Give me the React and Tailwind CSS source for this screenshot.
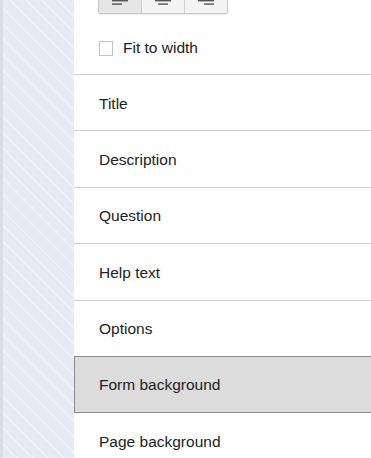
import React from 'react';

const rows = ['Title', 'Description', 'Question', 'Help text', 'Options', 'Form background', 'Page background'];

const AlignIcon = ({ align }) => {
  const x2 = align === 'left' ? 0 : align === 'center' ? 3 : 6;
  return (
    <svg width="16" height="7" viewBox="0 0 16 7">
      <rect x="0" y="0" width="16" height="1.4" fill="#555" />
      <rect x={x2} y="3.4" width="10" height="1.4" fill="#555" />
    </svg>
  );
};

export default function App() {
  return (
    <div className="flex w-[371px] h-[458px] overflow-hidden bg-white font-['Liberation_Sans',Arial,sans-serif] text-[15.5px] text-[#222]">
      {/* striped gutter */}
      <div className="w-[74px] shrink-0 flex">
        <div className="w-[3px] bg-[#d9dee6]" />
        <div className="flex-1 bg-[#e6ecf5] bg-[repeating-linear-gradient(45deg,#e5ebf4_0px,#e5ebf4_9px,#eef2f8_9px,#eef2f8_11px)]" />
      </div>

      <div className="flex-1 flex flex-col">
        {/* alignment buttons */}
        <div className="pl-[24px] h-[15px] shrink-0 flex">
          <div className="flex -mt-[12px] h-[26px] border border-[#c8c8c8] rounded-b-[2px] shadow-[0_1px_1px_rgba(0,0,0,0.08)]">
            <div className="w-[43px] flex items-start justify-center pt-[11px] bg-[#e6e6e6] border-r border-[#cfcfcf]">
              <AlignIcon align="left" />
            </div>
            <div className="w-[43px] flex items-start justify-center pt-[11px] bg-[#f4f4f4] border-r border-[#cfcfcf]">
              <AlignIcon align="center" />
            </div>
            <div className="w-[42px] flex items-start justify-center pt-[11px] bg-[#f4f4f4]">
              <AlignIcon align="right" />
            </div>
          </div>
        </div>

        {/* fit to width */}
        <div className="h-[60px] shrink-0 flex items-start pl-[25px] pt-[26px] border-b border-[#d0d0d0]">
          <div className="w-[14px] h-[15px] border border-[#c2c2c2] bg-white mr-[10px]" />
          <span className="leading-[15px] -mt-[1px]">Fit to width</span>
        </div>

        {rows.map((r) => {
          const selected = r === 'Form background';
          return (
            <div
              key={r}
              className={
                selected
                  ? 'h-[57px] shrink-0 flex items-center pl-[24px] pt-[1px] bg-[#dcdcdc] border border-r-0 border-[#8a8a8a] -mt-px'
                  : 'h-[56.4px] shrink-0 flex items-center pl-[25px] pt-[1px] border-b border-[#d0d0d0]'
              }
            >
              {r}
            </div>
          );
        })}
      </div>
    </div>
  );
}
